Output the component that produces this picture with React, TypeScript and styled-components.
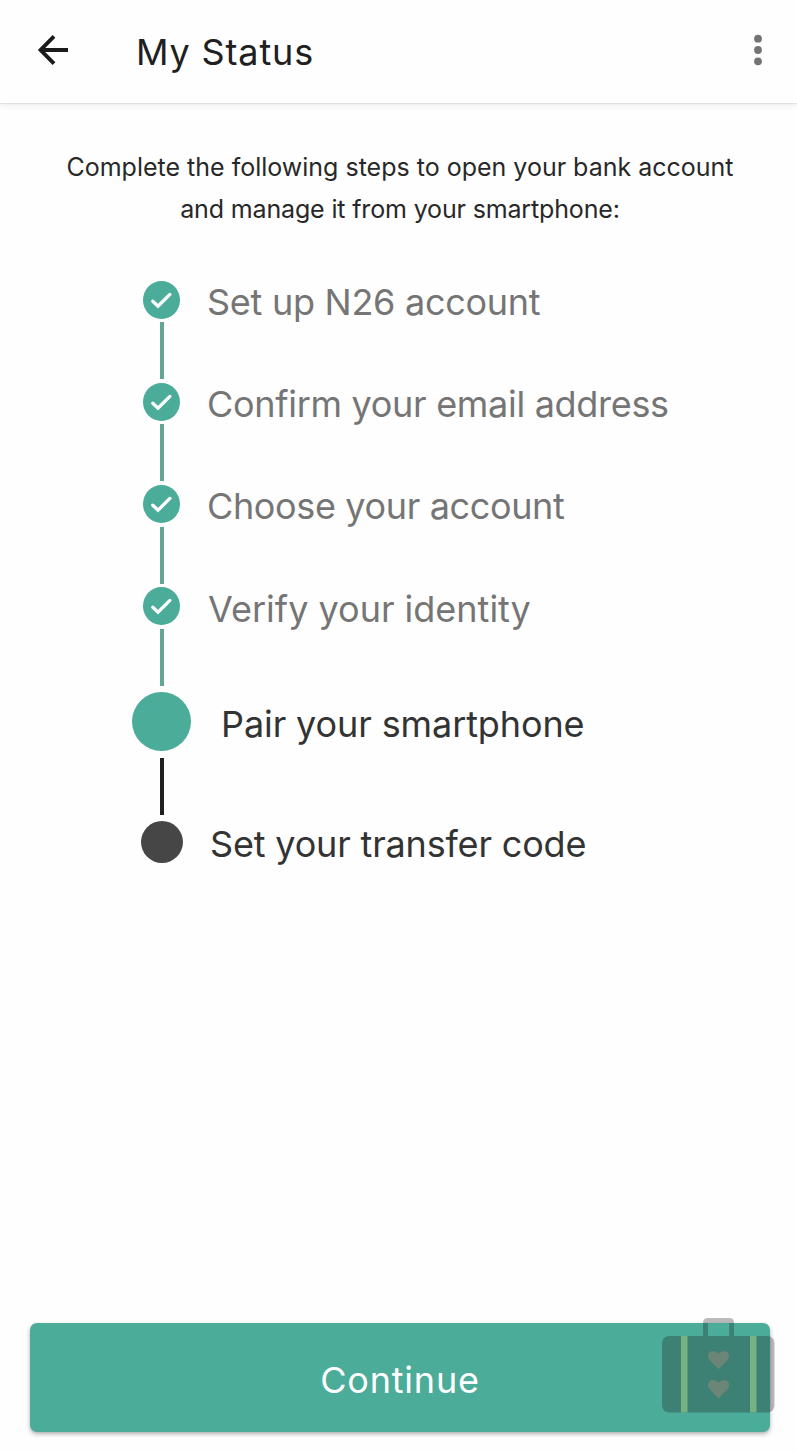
import React from "react";
import styled, { createGlobalStyle } from "styled-components";

const GlobalStyle = createGlobalStyle`
  * { box-sizing: border-box; }
  body {
    margin: 0;
    background: #fefefe;
    font-family: Inter, "Liberation Sans", sans-serif;
    color: #222;
  }
`;

const Screen = styled.div`
  width: 797px;
  height: 1453px;
  display: flex;
  flex-direction: column;
  overflow: hidden;
`;

const Header = styled.header`
  height: 103px;
  flex: none;
  display: flex;
  align-items: center;
  padding: 0 34px 3px 36px;
  background: #fefefe;
  box-shadow: 0 1px 1px rgba(0, 0, 0, 0.07), 0 2px 7px rgba(0, 0, 0, 0.08);
`;

const IconButton = styled.button`
  display: flex;
  padding: 0;
  border: 0;
  background: none;
`;

const Title = styled.h1`
  flex: 1;
  margin: 4px 0 0 66px;
  font-size: 36px;
  line-height: 44px;
  font-weight: 400;
  letter-spacing: 0.85px;
  color: #202020;
`;

const Intro = styled.p`
  margin: 43px 0 0;
  padding-left: 3px;
  text-align: center;
  font-size: 25px;
  line-height: 42px;
  color: #282828;
`;

const IntroLine = styled.span<{ $tracking: number }>`
  display: block;
  letter-spacing: ${(p) => p.$tracking}px;
`;

const Steps = styled.ol`
  list-style: none;
  margin: 50.6px 0 0;
  padding: 0 0 0 132px;
`;

const Step = styled.li`
  display: flex;
  align-items: flex-start;
`;

const Rail = styled.div`
  width: 59px;
  flex: none;
  display: flex;
  flex-direction: column;
  align-items: center;
`;

const Marker = styled.div<{ $width: number; $height: number; $color: string }>`
  width: ${(p) => p.$width}px;
  height: ${(p) => p.$height}px;
  border-radius: 50%;
  background: ${(p) => p.$color};
  display: flex;
  align-items: center;
  justify-content: center;
`;

const Connector = styled.div<{ $color: string; $before: number; $after: number }>`
  width: 4px;
  height: 57px;
  margin: ${(p) => p.$before}px 0 ${(p) => p.$after}px;
  background: ${(p) => p.$color};
`;

const Label = styled.span<{ $height: number; $indent: number; $tracking: number; $active: boolean }>`
  margin: 2.2px 0 0 ${(p) => p.$indent}px;
  font-size: 36px;
  font-weight: 400;
  line-height: ${(p) => p.$height}px;
  letter-spacing: ${(p) => p.$tracking}px;
  white-space: nowrap;
  color: ${(p) => (p.$active ? "#333" : "#757575")};
`;

const Footer = styled.footer`
  position: relative;
  margin: auto 27px 21px 30px;
`;

const ContinueButton = styled.button`
  display: block;
  width: 100%;
  height: 109px;
  padding: 5px 0 0;
  border: 0;
  border-radius: 7px;
  background: #4aac99;
  box-shadow: 0 2px 4px rgba(0, 0, 0, 0.32);
  color: #fff;
  font-family: inherit;
  font-size: 36px;
  letter-spacing: 0.8px;
`;

const Suitcase = styled.svg`
  position: absolute;
  right: -5px;
  top: -6px;
`;

const GREEN = "#4aac99";
const LINE_GREEN = "#62a795";
const DARK = "#464646";

type StepData = {
  label: string;
  width: number;
  height: number;
  color: string;
  indent: number;
  tracking: number;
  done?: boolean;
  line?: { color: string; before: number; after: number };
};

const doneMarker = { width: 37, height: 38, color: GREEN, done: true };
const doneLine = { color: LINE_GREEN, before: 3.5, after: 3.8 };

const steps: StepData[] = [
  { ...doneMarker, label: "Set up N26 account", indent: 16, tracking: -0.27, line: doneLine },
  { ...doneMarker, label: "Confirm your email address", indent: 16, tracking: -0.3, line: doneLine },
  { ...doneMarker, label: "Choose your account", indent: 16, tracking: -0.36, line: doneLine },
  { ...doneMarker, label: "Verify your identity", indent: 17, tracking: 0, line: { ...doneLine, after: 6.5 } },
  { label: "Pair your smartphone", width: 59, height: 59, color: GREEN, indent: 30, tracking: -0.1, line: { color: "#202020", before: 6.5, after: 6 } },
  { label: "Set your transfer code", width: 42, height: 42, color: DARK, indent: 19, tracking: -0.17 },
];

const BackArrow = () => (
  <svg width="34" height="34" viewBox="0 0 34 34" fill="none" stroke="#1b1b1b" strokeWidth="3.9">
    <path d="M18 3.4 4.6 17 18 30.6M4 17h28" />
  </svg>
);

const MoreDots = () => (
  <svg width="10" height="34" viewBox="0 0 10 34" fill="#747474">
    <circle cx="5" cy="5.7" r="3.9" />
    <circle cx="5" cy="17" r="3.9" />
    <circle cx="5" cy="28.3" r="3.9" />
  </svg>
);

const Check = () => (
  <svg width="23" height="20" viewBox="0 0 23 20" fill="none" stroke="#fff" strokeWidth="3.3" strokeLinecap="round">
    <path d="M2.800 11.200 8 16.200 19.900 4.400" />
  </svg>
);

const HEART = "M0 18.5-9 9.3C-14 3.5-6.5-4 0 2.8 6.5-4 14 3.5 9 9.3Z";

const SuitcaseBadge = () => (
  <Suitcase width="113" height="96" viewBox="0 0 113 96">
    <path d="M41 19V6Q41 1 46 1H67.500Q72 1 72 6V19H67.200V6H46V19Z" fill="#1f1f1f" fillOpacity=".3" />
    <rect x="0" y="19" width="112.500" height="76.500" rx="7" fill="#1f1f1f" fillOpacity=".3" />
    <path d="M19 19h6.500v76.500H19zM88 19h6.500v76.500H88z" fill="#77b283" />
    <g fill="#6b8576">
      <path d={HEART} transform="translate(56.500 33.800)" />
      <path d={HEART} transform="translate(56.500 63)" />
    </g>
  </Suitcase>
);

export default function App() {
  return (
    <Screen>
      <GlobalStyle />
      <Header>
        <IconButton aria-label="Back">
          <BackArrow />
        </IconButton>
        <Title>My Status</Title>
        <IconButton aria-label="More options">
          <MoreDots />
        </IconButton>
      </Header>
      <Intro>
        <IntroLine $tracking={0}>Complete the following steps to open your bank account</IntroLine>
        <IntroLine $tracking={-0.15}>and manage it from your smartphone:</IntroLine>
      </Intro>
      <Steps>
        {steps.map((s) => (
          <Step key={s.label}>
            <Rail>
              <Marker $width={s.width} $height={s.height} $color={s.color}>
                {s.done && <Check />}
              </Marker>
              {s.line && <Connector $color={s.line.color} $before={s.line.before} $after={s.line.after} />}
            </Rail>
            <Label $height={s.height} $indent={s.indent} $tracking={s.tracking} $active={!s.done}>
              {s.label}
            </Label>
          </Step>
        ))}
      </Steps>
      <Footer>
        <ContinueButton>Continue</ContinueButton>
        <SuitcaseBadge />
      </Footer>
    </Screen>
  );
}
